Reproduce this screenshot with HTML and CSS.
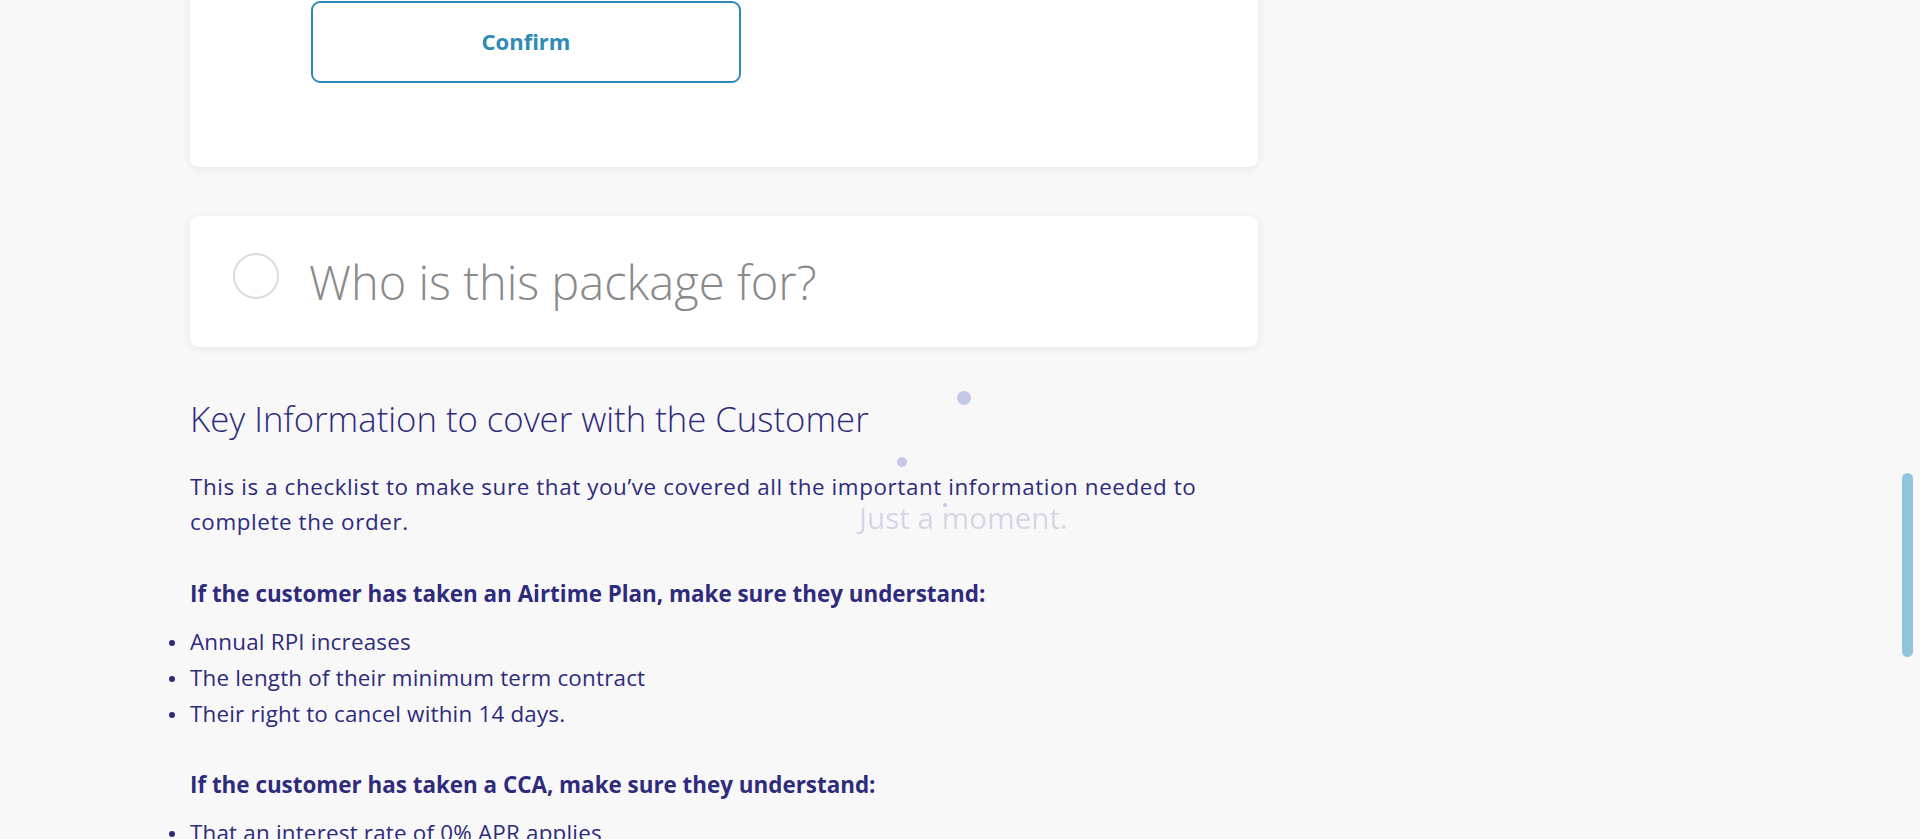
FILE: index.html
```html
<!DOCTYPE html>
<html lang="en">
<head>
<meta charset="utf-8">
<title>Order checklist</title>
<link rel="stylesheet" href="styles.css">
</head>
<body>
<main class="page">
  <section class="card card--confirm">
    <button class="btn-confirm" type="button">Confirm</button>
  </section>

  <section class="card card--step">
    <span class="step-radio" aria-hidden="true"></span>
    <h2 class="step-title">Who is this package for?</h2>
  </section>

  <section class="key-info">
    <h3 class="key-title">Key Information to cover with the Customer</h3>
    <p class="key-intro">This is a checklist to make sure that you’ve covered all the important information needed to complete the order.</p>

    <p class="key-sub">If the customer has taken an Airtime Plan, make sure they understand:</p>
    <ul class="key-list">
      <li>Annual RPI increases</li>
      <li>The length of their minimum term contract</li>
      <li>Their right to cancel within 14 days.</li>
    </ul>

    <p class="key-sub key-sub--spaced">If the customer has taken a CCA, make sure they understand:</p>
    <ul class="key-list">
      <li>That an interest rate of 0% APR applies</li>
      <li>The total amount payable</li>
    </ul>
  </section>
</main>

<div class="loader" aria-live="polite">
  <span class="loader-dot loader-dot--lg"></span>
  <span class="loader-dot loader-dot--md"></span>
  <span class="loader-dot loader-dot--sm"></span>
  <span class="loader-text">Just a moment.</span>
</div>

<div class="scroll-thumb" aria-hidden="true"></div>
</body>
</html>
```

FILE: styles.css
```css
html, body {
  margin: 0;
  padding: 0;
}

body {
  background: #f8f8f8;
  font-family: "Open Sans", "Noto Sans", sans-serif;
  color: #2e2b7c;
  overflow: hidden;
  height: 839px;
}

.page {
  width: 1068px;
  margin-left: 190px;
}

.card {
  background: #ffffff;
  border-radius: 9px;
  box-shadow: 0 2px 8px rgba(0, 0, 0, 0.07);
}

.card--confirm {
  margin-top: -40px;
  padding: 41px 0 84px 121px;
}

.btn-confirm {
  display: block;
  width: 430px;
  height: 82px;
  box-sizing: border-box;
  border: 2px solid #2e8bb9;
  border-radius: 9px;
  background: #ffffff;
  color: #2e8bb9;
  font-family: "Open Sans", "Noto Sans", sans-serif;
  font-size: 22px;
  font-weight: 700;
  padding: 0 0 2px;
}

.card--step {
  margin-top: 49px;
  height: 131px;
  box-sizing: border-box;
  display: flex;
  align-items: center;
  padding: 0 0 6px 43px;
  gap: 30px;
}

.step-radio {
  width: 46px;
  height: 46px;
  box-sizing: border-box;
  border: 2.5px solid #dcdcdc;
  border-radius: 50%;
  flex: none;
  margin-bottom: 6px;
}

.step-title {
  margin: 8px 0 0;
  font-size: 47px;
  font-weight: 300;
  color: #8a8a8a;
  line-height: 1.2;
}

.key-info {
  padding-top: 50px;
}

.key-title {
  margin: 0;
  font-size: 34.7px;
  font-weight: 300;
  line-height: 44px;
  color: #2e2b7c;
}

.key-intro {
  margin: 28px 0 0;
  font-size: 22.4px;
  line-height: 35px;
  letter-spacing: 0.6px;
}

.key-sub {
  margin: 37px 0 0;
  font-size: 22.4px;
  line-height: 36px;
  font-weight: 700;
}

.key-sub--spaced {
  margin-top: 35px;
}

.key-list {
  margin: 12px 0 0;
  padding: 0;
  list-style: none;
  font-size: 22.4px;
  line-height: 36px;
  letter-spacing: 0.2px;
}

.key-list li {
  position: relative;
}

.key-list li::before {
  content: "";
  position: absolute;
  left: -21px;
  top: 16px;
  width: 6px;
  height: 6px;
  border-radius: 50%;
  background: #2e2b7c;
}

.loader {
  position: fixed;
  left: 0;
  top: 0;
  width: 0;
  height: 0;
}

.loader-dot {
  position: absolute;
  border-radius: 50%;
  background: #c4c7e8;
}

.loader-dot--lg {
  left: 957px;
  top: 391px;
  width: 14px;
  height: 14px;
}

.loader-dot--md {
  left: 897px;
  top: 457px;
  width: 10px;
  height: 10px;
}

.loader-dot--sm {
  left: 943px;
  top: 503px;
  width: 4px;
  height: 4px;
}

.loader-text {
  position: absolute;
  left: 859px;
  top: 500px;
  white-space: nowrap;
  font-size: 29.7px;
  font-weight: 400;
  color: #d6d5e7;
  filter: blur(0.6px);
  line-height: 36px;
}

.scroll-thumb {
  position: fixed;
  left: 1902px;
  top: 473px;
  width: 11px;
  height: 184px;
  border-radius: 6px;
  background: #93c4dd;
}
```
